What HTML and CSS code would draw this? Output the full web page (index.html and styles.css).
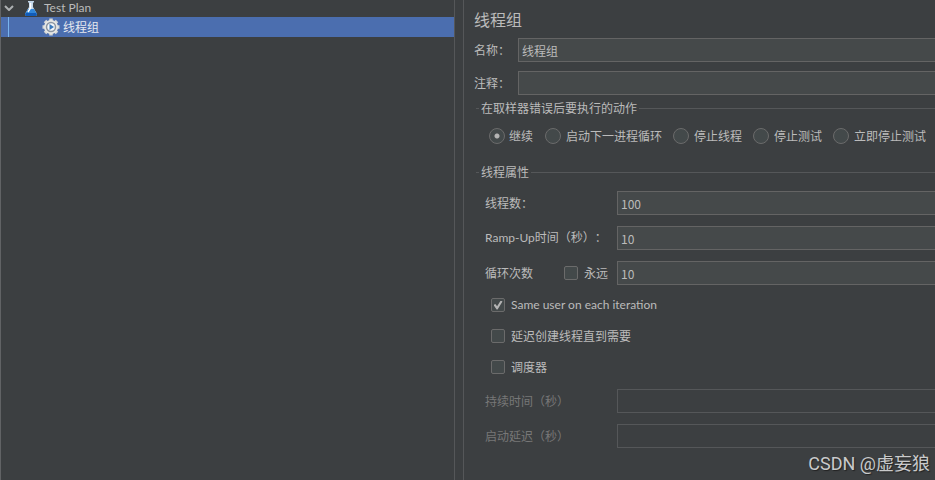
FILE: index.html
```html
<!DOCTYPE html>
<html lang="zh-CN">
<head>
<meta charset="utf-8">
<title>线程组</title>
<link rel="stylesheet" href="styles.css">
</head>
<body>
<div class="app">
  <nav class="tree">
    <div class="node root">
      <svg class="chevron" viewBox="0 0 10 6"><path d="M1 1l4 4 4-4" fill="none" stroke="#adb0b2" stroke-width="2"/></svg>
      <svg class="flask" viewBox="0 0 14 15">
        <path d="M4 0h6v1L9 2v4l4 7-1 2H2l-1-2 4-7V2L4 1z" fill="#c3d6e8"/>
        <path d="M4 8h6l3 5-1 2H2l-1-2z" fill="#3187da"/>
        <path d="M2 12h10l1 1-1 2H2l-1-2z" fill="#125bb7"/>
        <path d="M6.500 2v5L4 11" fill="none" stroke="#fff" stroke-width="1.500"/>
      </svg>
      <span class="latin">Test Plan</span>
    </div>
    <div class="node selected">
      <svg class="gear" viewBox="0 0 18 18">
        <g stroke="#d7d9d8" stroke-width="3.500"><path d="M9 0.500v17M.5 9h17M3 3l12 12M15 3L3 15"/></g>
        <circle cx="9" cy="9" r="7" fill="#e6e7e5"/>
        <circle cx="9" cy="9" r="4.500" fill="#f2f6fa" stroke="#8c96a2" stroke-width="1.500"/>
        <path d="M7.500 6v6L12 9z" fill="#3978bb"/>
      </svg>
      <span>线程组</span>
    </div>
  </nav>
  <main class="editor">
    <h1>线程组</h1>
    <div class="field"><label for="name">名称：</label><input class="box" id="name" type="text" value="线程组"></div>
    <div class="field"><label for="comment">注释：</label><input class="box" id="comment" type="text"></div>
    <fieldset class="actions">
      <legend>在取样器错误后要执行的动作</legend>
      <div class="radios">
        <label><input type="radio" name="action" checked>继续</label>
        <label><input type="radio" name="action">启动下一进程循环</label>
        <label><input type="radio" name="action">停止线程</label>
        <label><input type="radio" name="action">停止测试</label>
        <label><input type="radio" name="action">立即停止测试</label>
      </div>
    </fieldset>
    <fieldset class="props">
      <legend>线程属性</legend>
      <div class="prop"><label for="threads">线程数：</label><input class="box" id="threads" type="text" value="100"></div>
      <div class="prop"><label class="latin" for="ramp">Ramp-Up时间（秒）：</label><input class="box" id="ramp" type="text" value="10"></div>
      <div class="prop">
        <div class="loop"><label for="loops">循环次数</label><label class="check"><input type="checkbox">永远</label></div>
        <input class="box" id="loops" type="text" value="10">
      </div>
      <div class="checks">
        <label class="check latin"><input type="checkbox" checked>Same user on each iteration</label>
        <label class="check"><input type="checkbox">延迟创建线程直到需要</label>
        <label class="check"><input type="checkbox">调度器</label>
      </div>
      <div class="prop off"><label for="duration">持续时间（秒）</label><input class="box" id="duration" type="text" disabled></div>
      <div class="prop off"><label for="delay">启动延迟（秒）</label><input class="box" id="delay" type="text" disabled></div>
    </fieldset>
  </main>
  <div class="watermark">CSDN @虚妄狼</div>
</div>
</body>
</html>
```
FILE: styles.css
```css
* { box-sizing: border-box; }
body {
  margin: 0;
  background: #3c3f41;
  color: #bbb;
  font: 12px/16px "Noto Sans CJK SC", sans-serif;
  text-spacing-trim: space-all;
}
.latin { font-family: Lato, "Noto Sans CJK SC", sans-serif; }
input { margin: 0; font: inherit; color: inherit; }
.app {
  position: relative;
  display: grid;
  grid-template-columns: 455px minmax(0, 1fr);
  column-gap: 8px;
  min-height: 100vh;
  overflow: hidden;
}
.tree {
  border-left: 1px solid #616365;
  border-right: 1px solid #555759;
}
.node { display: flex; align-items: center; white-space: nowrap; }
.root { height: 17px; padding: 0 0 1px 3px; }
.chevron { width: 10px; height: 6px; margin-right: 10px; }
.flask { width: 14px; height: 15px; margin-right: 6px; }
.selected {
  height: 20px;
  padding-left: 41px;
  color: #e4e8ef;
  background: linear-gradient(#78b4ee, #78b4ee) 7px 0 / 1px 100% no-repeat #4b6eaf;
}
.gear { width: 18px; height: 18px; margin-right: 3px; }
.editor {
  border-left: 1px solid #555759;
  padding: 7px 0 0 10px;
}
h1 { margin: 0 0 7px; font-size: 16px; line-height: 24px; font-weight: 400; }
.field { display: flex; align-items: center; margin-bottom: 9px; }
.field label { flex: none; width: 44px; }
.box {
  flex: 1;
  min-width: 0;
  height: 24px;
  padding: 0 3px;
  border: 1px solid #646464;
  border-right: 0;
  border-radius: 0;
  background: #45494a;
  outline: 0;
}
fieldset {
  min-width: 0;
  margin: 0 0 0 2px;
  padding: 0;
  border: 0 solid #555759;
  border-top-width: 1px;
}
legend { margin-left: 3px; padding: 0 2px; }
.actions { height: 64px; margin-top: -4px; }
.radios { display: flex; gap: 12px; padding: 12px 0 0 13px; }
.radios label, .check { display: flex; align-items: center; gap: 4px; white-space: nowrap; }
[type="radio"], [type="checkbox"] {
  appearance: none;
  flex: none;
  border: 1px solid #6b6b6b;
  background: #43494a;
}
[type="radio"] { width: 16px; height: 16px; border-radius: 50%; }
[type="radio"]:checked { background: radial-gradient(circle, #b4b4b4 2px, #43494a 3px); }
[type="checkbox"] { width: 14px; height: 14px; border-radius: 2px; display: grid; place-items: center; }
[type="checkbox"]:checked::before {
  content: "";
  width: 9px;
  height: 9px;
  background: #b4b4b4;
  clip-path: polygon(0 50%, 20% 40%, 40% 65%, 80% 0, 100% 10%, 45% 100%, 35% 100%);
}
.prop { display: flex; align-items: center; margin: 0 0 11px 9px; }
.prop > :first-child { flex: none; width: 132px; }
.props legend + .prop { margin-top: 11px; }
.loop { display: flex; justify-content: space-between; padding-right: 9px; }
.radios label + label { gap: 5px; margin-right: -1px; }
.check { gap: 6px; }
.checks { display: grid; gap: 15px; padding: 1px 0 14px 15px; }
.off { color: #777; }
.off .box { background: transparent; border-color: #555759; }
.watermark {
  position: absolute;
  right: 5px;
  bottom: 4px;
  color: #c9cacb;
  font: 18px/24px Roboto, "Noto Sans CJK SC", sans-serif;
  text-shadow: 1px 1px 1px #222;
}
```
